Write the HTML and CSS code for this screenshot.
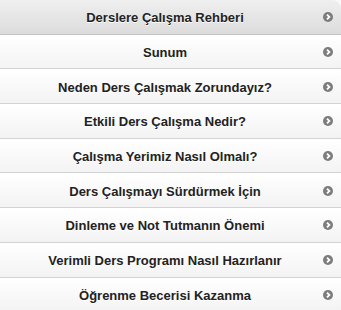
FILE: index.html
```html
<!DOCTYPE html>
<html lang="tr">
<head>
    <meta charset="UTF-8">
    <meta name="viewport" content="width=device-width, initial-scale=1.0">
    <title>Ders Çalışma Rehberi</title>
    <link rel="stylesheet" href="styles.css">
</head>
<body>
    <ul class="menu-list">
        <li class="menu-item menu-head"><a href="#">Derslere Çalışma Rehberi</a></li>
        <li class="menu-item"><a href="#">Sunum</a></li>
        <li class="menu-item"><a href="#">Neden Ders Çalışmak Zorundayız?</a></li>
        <li class="menu-item"><a href="#">Etkili Ders Çalışma Nedir?</a></li>
        <li class="menu-item"><a href="#">Çalışma Yerimiz Nasıl Olmalı?</a></li>
        <li class="menu-item"><a href="#">Ders Çalışmayı Sürdürmek İçin</a></li>
        <li class="menu-item"><a href="#">Dinleme ve Not Tutmanın Önemi</a></li>
        <li class="menu-item"><a href="#">Verimli Ders Programı Nasıl Hazırlanır</a></li>
        <li class="menu-item"><a href="#">Öğrenme Becerisi Kazanma</a></li>
    </ul>
</body>
</html>
```

FILE: styles.css
```css
body {
    margin: 0;
    padding: 0;
    font-family: 'Liberation Sans', Arial, sans-serif;
    background: #f9f9f9;
}

.menu-list {
    list-style: none;
    margin: 0;
    padding: 0;
    border-top-right-radius: 9px;
    overflow: hidden;
}

.menu-item {
    height: 34.7px;
    box-sizing: border-box;
    border-bottom: 1px solid #d3d3d3;
    border-top: 1px solid #fff;
    background: linear-gradient(#ffffff, #f3f3f3);
}

.menu-item a {
    display: flex;
    align-items: center;
    justify-content: center;
    height: 100%;
    padding: 1px 21px 0 10px;
    box-sizing: border-box;
    position: relative;
    font-size: 13px;
    font-weight: bold;
    color: #222;
    text-decoration: none;
    text-shadow: 0 1px 0 #fff;
}

/* arrow icon */
.menu-item a::after {
    content: "";
    position: absolute;
    right: 8px;
    top: 50%;
    width: 10px;
    height: 10px;
    margin-top: -5px;
    border-radius: 50%;
    background: #7d7d7d url("data:image/svg+xml,%3Csvg xmlns='http://www.w3.org/2000/svg' viewBox='0 0 10 10'%3E%3Cpath d='M4 2.6 L6.4 5 L4 7.4' fill='none' stroke='%23fff' stroke-width='1.8'/%3E%3C/svg%3E") center / 10px 10px no-repeat;
}

.menu-head {
    border-top: none;
    background: linear-gradient(#efefef, #dcdcdc);
    border-bottom-color: #c4c4c4;
}
```
